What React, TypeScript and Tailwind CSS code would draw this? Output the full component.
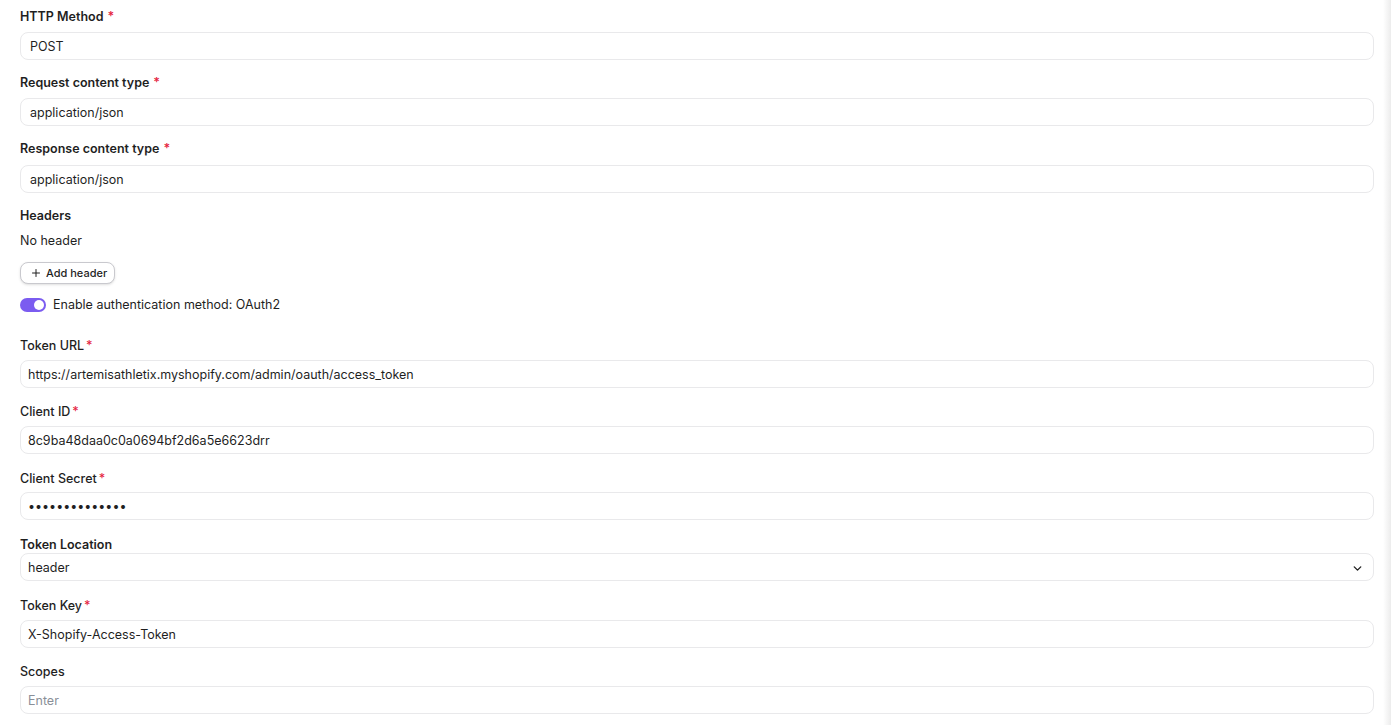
import { ChevronDown, Plus } from "lucide-react";

const font = { fontFamily: "Inter, 'Noto Sans', sans-serif" };

interface FieldProps {
    label: string
    value?: string
    placeholder?: string
    required?: boolean
    strong?: boolean
    className?: string
    inputClass?: string
}

const Field = (props: FieldProps) => {
    return (
        <div className={props.className}>
            <div className={`pt-[2px] text-[12.5px] leading-[18px] text-[#1f1f1f] ${props.strong ? 'font-semibold' : 'font-medium'}`}>
                {props.label}
                {props.required && <span className={`text-[#e5243f] ${props.strong ? 'ml-1' : 'ml-0.5'}`}>*</span>}
            </div>
            <div className={`h-[28px] flex items-center border border-[#e9e9eb] rounded-lg bg-white text-[12.5px] ${props.inputClass ?? 'mt-[5px] pt-[2px] pl-[7px]'}`}>
                {props.value ? (
                    <span className="text-[#1f1f1f]">{props.value}</span>
                ) : (
                    <span className="text-[#8a8f98]">{props.placeholder}</span>
                )}
            </div>
        </div>
    )
}

export default function App() {
    return (
        <div className="flex w-full min-h-[725px] bg-white" style={font}>
            <div className="flex-1 pl-5 pr-[9px] pt-[6px] pb-4">
                <Field label="HTTP Method" required strong value="POST" inputClass="mt-[6px] pt-[3px] pl-[9px]" />
                <Field label="Request content type" required strong value="application/json" className="mt-3" inputClass="mt-[6px] pt-[3px] pl-[9px]" />
                <Field label="Response content type" required strong value="application/json" className="mt-3" inputClass="mt-[7px] pt-[3px] pl-[9px]" />

                <div className="mt-3 pt-[2px] text-[12.5px] leading-[18px] font-semibold text-[#1f1f1f]">Headers</div>
                <div className="mt-[5px] pt-[2px] text-[12.5px] leading-[18px] text-[#1f1f1f]">No header</div>
                <button className="mt-3 h-[22px] pl-[9px] pr-[7px] flex items-center gap-1 border border-[#c9c9ce] rounded-lg shadow-sm text-[11px] font-medium text-[#1f1f1f] bg-white">
                    <Plus size={12} strokeWidth={2} />
                    Add header
                </button>
                <div className="mt-[11px] h-5 flex items-center gap-[7px]">
                    <div className="w-[26px] h-[14px] rounded-full bg-[#7b5cf0] flex items-center justify-end pr-[2px]">
                        <div className="w-[10px] h-[10px] rounded-full bg-white" />
                    </div>
                    <span className="pt-px text-[12.5px] text-[#1f1f1f]">Enable authentication method: OAuth2</span>
                </div>

                <Field label="Token URL" required value="https://artemisathletix.myshopify.com/admin/oauth/access_token" className="mt-5" />
                <Field label="Client ID" required value="8c9ba48daa0c0a0694bf2d6a5e6623drr" className="mt-[13px]" />
                <div className="mt-[14px]">
                    <div className="pt-[2px] text-[12.5px] leading-[18px] font-medium text-[#1f1f1f]">
                        Client Secret<span className="ml-0.5 text-[#e5243f]">*</span>
                    </div>
                    <div className="mt-1 h-[28px] pt-[2px] flex items-center border border-[#e9e9eb] rounded-lg bg-white pl-[7px] text-[12.5px] text-[#1f1f1f]">
                        ••••••••••••••
                    </div>
                </div>
                <div className="mt-[14px]">
                    <div className="pt-[2px] text-[12.5px] leading-[17px] font-semibold text-[#1f1f1f]">Token Location</div>
                    <div className="h-[28px] pt-[2px] flex items-center justify-between border border-[#e9e9eb] rounded-lg bg-white pl-[7px] pr-[9px] text-[12.5px] text-[#1f1f1f]">
                        <span>header</span>
                        <ChevronDown size={13} strokeWidth={2.5} />
                    </div>
                </div>
                <Field label="Token Key" required value="X-Shopify-Access-Token" className="mt-[14px]" />
                <Field label="Scopes" placeholder="Enter" className="mt-[13px]" />
            </div>
            <div className="w-[8px] bg-gradient-to-r from-white to-[#ececec]" />
        </div>
    )
}
